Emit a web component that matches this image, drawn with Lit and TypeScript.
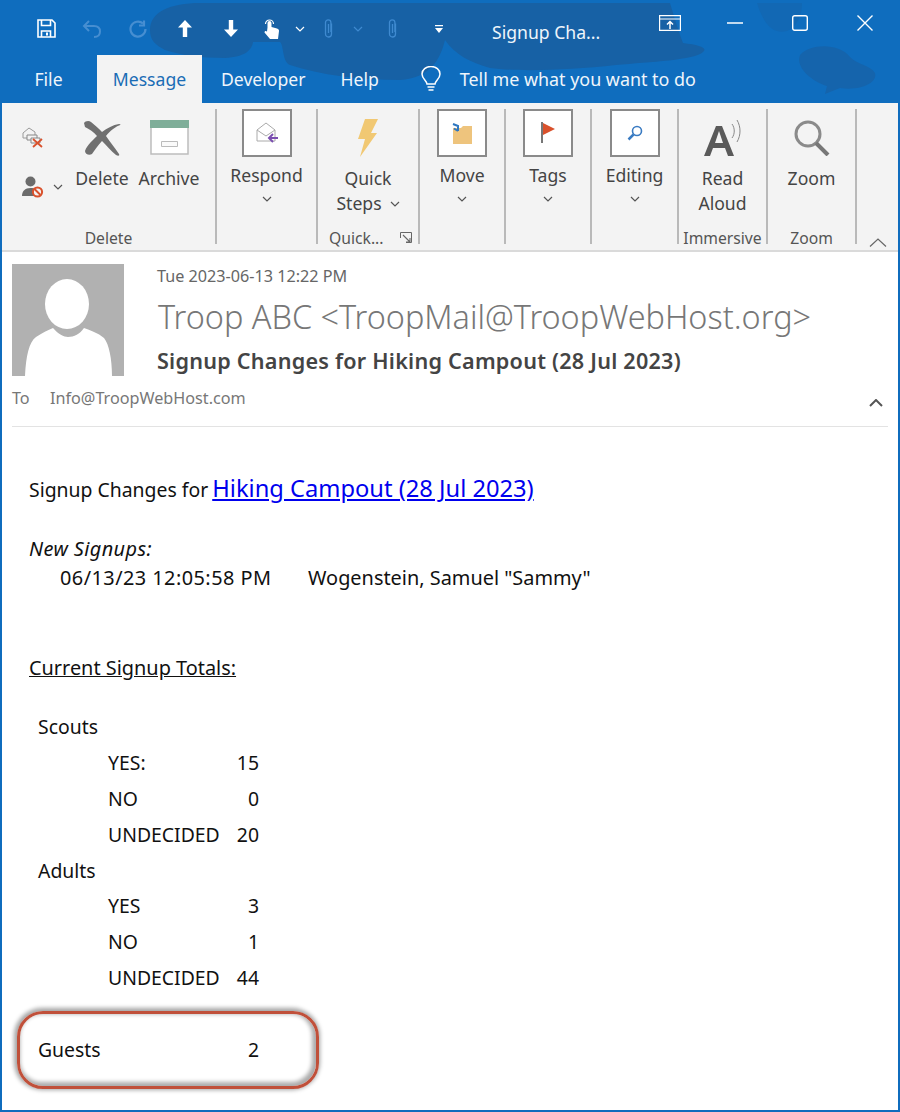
import { LitElement, html, css, svg } from "lit";
import { customElement } from "lit/decorators.js";

const chev = (cls = "chev") => html`<svg class=${cls} viewBox="0 0 10 6"><path d="M1 1l4 4 4-4" fill="none" stroke="currentColor" stroke-width="1.2"/></svg>`;

@customElement("app-root")
export class AppRoot extends LitElement {
  static styles = css`
    :host { display: block; width: 900px; height: 1112px; overflow: hidden; font-family: "Noto Sans", "Open Sans", sans-serif; }
    * { box-sizing: border-box; }
    .win { position: relative; width: 900px; height: 1112px; background: #fff; border: solid #0f6cbd; border-width: 0 2px 2px; display: flex; flex-direction: column; }
    .head { position: relative; margin: 0 -2px; height: 103px; background: #0f6dbe; color: #fff; flex: none; overflow: hidden; }
    .patches { position: absolute; inset: 0; width: 900px; height: 103px; }
    .qat, .tabs { position: relative; display: flex; align-items: center; }
    .qat { height: 55px; padding: 2px 0 0 23px; }
    .slot { display: flex; justify-content: center; align-items: center; height: 32px; flex: none; }
    .w46 { width: 46px; } .w34 { width: 34px; } .w24 { width: 24px; } .w28 { width: 28px; } .w6 { width: 6px; } .w15 { width: 15px; } .w1 { width: 1px; }
    .title { margin-left: 39px; width: 150px; font-size: 17.6px; white-space: nowrap; color: #eef5fb; margin-top: 6px; }
    .ctl { display: flex; position: absolute; right: 3px; top: 0; height: 46px; }
    .ctl div { width: 65px; display: flex; justify-content: center; align-items: center; }
    .tabs { height: 48px; font-size: 17.6px; color: #eef5fb; }
    .tab { height: 48px; display: flex; align-items: center; }
    .tab.file { width: 97px; justify-content: center; }
    .tab.msg { width: 105px; justify-content: center; background: #f3f3f3; color: #1a6cb5; }
    .tab.dev { margin-left: 19px; }
    .tab.help { margin-left: 35px; }
    .tab.bulb { margin-left: 42px; }
    .tab.tell { margin-left: 19px; font-size: 17.9px; }

    .ribbon { height: 149px; flex: none; background: #f3f3f3; border-bottom: 2px solid #dadada; display: flex; padding-top: 6px; color: #444; font-size: 17.6px; position: relative; }
    .grp { height: 135px; border-right: 2px solid #b9b9b9; display: flex; flex-direction: column; flex: none; }
    .g1 { width: 215px; } .g2 { width: 101px; } .g3 { width: 102px; } .g4 { width: 86px; } .g5 { width: 86px; } .g6 { width: 87px; } .g7 { width: 89px; } .g8 { width: 89px; }
    .gbody { height: 118px; flex: none; display: flex; flex-direction: column; align-items: center; line-height: 25px; }
    .glabel { height: 22px; line-height: 22px; font-size: 15.7px; text-align: center; color: #555; display: flex; justify-content: center; white-space: nowrap; }
    .box { width: 50px; height: 48px; border: 2px solid #8a8a8a; background: #fff; display: flex; align-items: center; justify-content: center; margin-bottom: 6px; flex: none; }
    .ico { height: 57px; flex: none; display: flex; align-items: center; justify-content: center; }
    .chev { width: 10px; height: 6px; color: #555; display: block; }
    .chev.wchev { color: #fff; }
    .chev.dchev { color: #3f8ad0; }
    .under { margin-top: 8px; }
    .row { flex-direction: row; align-items: flex-start; }
    .smalls { width: 69px; padding: 0 0 0 17px; flex: none; }
    .smalls .s1 { height: 40px; display: flex; align-items: flex-end; padding: 0 0 1px 3px; }
    .smalls .s2 { height: 36px; display: flex; align-items: center; gap: 9px; margin-top: 20px; padding-left: 3px; }
    .col1 { width: 62px; display: flex; flex-direction: column; align-items: center; flex: none; }
    .col2 { width: 66px; margin-left: 3px; display: flex; flex-direction: column; align-items: center; flex: none; }
    .inl { display: flex; align-items: center; gap: 8px; }
    .launch { margin-left: 16px; margin-top: 5px; }
    .qlab { justify-content: flex-start; padding-left: 11px; }
    .collapse { position: absolute; left: 867px; top: 135px; }

    .hdr { height: 175px; flex: none; position: relative; padding: 0 10px; color: #666; }
    .htop { display: flex; height: 124px; padding-top: 12px; }
    .avatar { width: 112px; height: 112px; flex: none; display: block; }
    .hmeta { margin-left: 34px; }
    .date { font-size: 16.2px; line-height: 22px; color: #666; margin-top: 1px; margin-left: -1px; }
    .sender { font-size: 32.4px; line-height: 42px; font-weight: 300; color: #777; margin-top: 8px; white-space: nowrap; }
    .subj { font-size: 21.6px; line-height: 28px; font-weight: 600; color: #444; margin-top: 10px; white-space: nowrap; letter-spacing: .23px; margin-left: -1px; }
    .to { display: flex; font-size: 16.2px; line-height: 22px; color: #777; height: 51px; padding-top: 11px; border-bottom: 1px solid #e3e3e3; position: relative; }
    .to span:first-child { width: 38px; }
    .upb { position: absolute; right: 5px; top: 23px; }

    .body { padding: 0 0 0 27px; color: #111; font-size: 19.4px; line-height: 26px; }
    .l1 { margin-top: 46px; height: 30px; display: flex; align-items: flex-end; gap: 4px; white-space: nowrap; }
    .l1 a { color: #0000ee; font-size: 23.7px; line-height: 30px; text-decoration: underline; }
    .new { margin-top: 33px; font-style: italic; font-size: 19.9px; letter-spacing: .4px; }
    .sign { display: flex; padding-left: 31px; margin-top: 3px; font-size: 19.9px; }
    .sign span:first-child { width: 248px; letter-spacing: .45px; }
    .cur { margin-top: 64px; text-decoration: underline; font-size: 19.9px; }
    .totals { margin-top: 28px; display: grid; grid-template-columns: 230px; }
    .tr { display: flex; height: 35.9px; align-items: center; }
    .tr.head2 { padding-left: 9px; }
    .tr.sub { padding-left: 79px; }
    .tr .v { margin-left: auto; }
    .guests { width: 302px; height: 78px; margin: 15px 0 0 -12px; border: 3px solid #c0503a; border-radius: 26px; box-shadow: -1px -1px 4px 2px #a5a5a5, inset -2px -2px 4px 2px #ababab; display: flex; align-items: center; padding: 0 0 1px 18px; }
    .guests .g { width: 224px; display: flex; justify-content: space-between; padding-right: 3px; }
  `;

  patches() {
    return svg`<svg class="patches" viewBox="0 0 900 103">
      <path fill="#1761a5" d="M150 30C150 12 170 3 200 3L670 3C675 20 680 35 683 43C700 45 708 48 703 52C695 60 650 62 616 65C570 70 520 72 490 68C470 62 455 55 445 40C440 60 430 78 400 80C360 80 320 75 290 65C282 62 284 45 280 42L253 42C252 50 245 57 225 58C200 58 180 55 165 50C155 45 150 40 150 30Z"/>
      <path fill="#1564ac" d="M800 55c10-12 40-12 50 2 8 8 20 8 25 16 3 10-15 18-35 15l-15 6 2-8c-14-4-32-18-27-31z"/>
      <path fill="#1268b4" d="M757 3h45c0 12-5 24-15 28-14 4-24-8-30-28z"/>
    </svg>`;
  }

  render() {
    const clip = html`<svg width="10" height="20" viewBox="0 0 10 20" fill="none" stroke="#3f8ad0" stroke-width="1.3"><path d="M7.500 4.500v10.500a3 3 0 0 1-6 0V3.500a2.700 2.700 0 0 1 5.400 0V13"/><path d="M4.500 5v9"/></svg>`;
    return html`<div class="win">
      <div class="head">
        ${this.patches()}
        <div class="qat">
          <div class="slot w46"><svg width="19" height="19" viewBox="0 0 19 19" fill="none" stroke="#fff" stroke-width="1.6"><path d="M1 1h14l3 3v14H1z"/><path d="M4.500 1v5.500h9V1M4.500 18v-6h9v6"/><path d="M10 13.500v3" stroke-width="2"/></svg></div>
          <div class="slot w46"><svg width="20" height="18" viewBox="0 0 20 18" fill="none" stroke="#468ed1" stroke-width="2"><path d="M7 1L2 6l5 5M2 6h10c4 0 6 2.500 6 5.500S16 17 12 17"/></svg></div>
          <div class="slot w46"><svg width="18" height="18" viewBox="0 0 18 18" fill="none" stroke="#468ed1" stroke-width="2.200"><path d="M14 3.500A7.500 7.500 0 1 0 16.500 9"/><path d="M10 5.500h5V.5"/></svg></div>
          <div class="slot w1"></div>
          <div class="slot w46"><svg width="14" height="17" viewBox="0 0 14 17" fill="#fff"><path d="M7 0l7 7.500H9.200V17H4.800V7.500H0z"/></svg></div>
          <div class="slot w46"><svg width="14" height="17" viewBox="0 0 14 17" fill="#fff"><path d="M7 17L0 9.500h4.800V0h4.400v9.500H14z"/></svg></div>
          <div class="slot w34"><svg width="15" height="20" viewBox="0 0 15 20" fill="#fff"><path d="M3.500 8.500V4a2 2 0 0 1 4 0v4l5.500 1.500c1.500.5 2 1 2 2.500L14 20H6L.5 13.500c0-1.500 1-2 2.500-1z"/><path d="M1.500 5a4 4 0 0 1 8 0" fill="none" stroke="#fff" stroke-width="1.200"/></svg></div>
          <div class="slot w24">${chev("chev wchev")}</div>
          <div class="slot w34">${clip}</div>
          <div class="slot w24">${chev("chev dchev")}</div>
          <div class="slot w6"></div>
          <div class="slot w34">${clip}</div>
          <div class="slot w15"></div>
          <div class="slot w28"><svg width="8" height="8" viewBox="0 0 8 8" fill="#fff"><path d="M0 0h8v1.200H0zM0 3h8L4 8z"/></svg></div>
          <div class="title">Signup Cha...</div>
          <div class="ctl">
            <div><svg width="22" height="16" viewBox="0 0 22 16" fill="none" stroke="#fff" stroke-width="1.200"><path d="M.6.6h20.800v14.800H.6zM.6 4h20.800"/><path d="M11 14V7M8 9.500l3-3 3 3" stroke-width="1.500"/></svg></div>
            <div><svg width="16" height="2" viewBox="0 0 16 2"><path d="M0 1h16" stroke="#fff" stroke-width="1.500"/></svg></div>
            <div><svg width="16" height="16" viewBox="0 0 16 16" fill="none" stroke="#fff" stroke-width="1.400"><rect x=".7" y=".7" width="14.600" height="14.600" rx="2"/></svg></div>
            <div><svg width="16" height="16" viewBox="0 0 16 16" fill="none" stroke="#fff" stroke-width="1.400"><path d="M.5.5l15 15M15.500.5l-15 15"/></svg></div>
          </div>
        </div>
        <div class="tabs">
          <div class="tab file">File</div>
          <div class="tab msg">Message</div>
          <div class="tab dev">Developer</div>
          <div class="tab help">Help</div>
          <div class="tab bulb"><svg width="20" height="26" viewBox="0 0 20 26" fill="none" stroke="#fff" stroke-width="1.500"><path d="M6 18c0-3-5-5-5-10a9 7.500 0 0 1 18 0c0 5-5 7-5 10z"/><path d="M6.500 21h7M7.500 24h5"/></svg></div>
          <div class="tab tell">Tell me what you want to do</div>
        </div>
      </div>

      <div class="ribbon">
        <div class="grp g1">
          <div class="gbody row">
            <div class="smalls">
              <div class="s1"><svg width="22" height="22" viewBox="0 0 22 22" fill="none"><path d="M1 7l6-5 6 4v6H1z" stroke="#999"/><path d="M5 9h10v5H5z" fill="#f3f3f3" stroke="#888"/><path d="M9 12h9v5H9z" fill="#f3f3f3" stroke="#888"/><path d="M11 13l9 8M20 13l-9 8" stroke="#d9512c" stroke-width="1.800"/></svg></div>
              <div class="s2"><svg width="22" height="22" viewBox="0 0 22 22"><circle cx="8.500" cy="5.500" r="5" fill="#6b6b6b"/><path d="M0 20c0-5 3-8 8.500-8S15 14 15 20z" fill="#6b6b6b"/><circle cx="15.500" cy="16" r="4.600" fill="#f3f3f3" stroke="#d9512c" stroke-width="2"/><path d="M12.500 13l6 6" stroke="#d9512c" stroke-width="2"/></svg>${chev()}</div>
            </div>
            <div class="col1"><div class="ico"><svg width="38" height="36" viewBox="0 0 38 36"><path d="M1 3c1-2 5-3 7-1 4 3 8 7 11 10C24 8 30 5 36 4c2 0 2 1 0 1.500-5 2-10 6.500-13 10.500 4 6 9 12 13 18 1 2-1 2-3 1-5-4-10-10-14-14-4 4-7 9-10 13-3 2-7 0-7-3 2-6 8-11 12-15C11 12 6 9 2 7z" fill="#707070"/></svg></div>Delete</div>
            <div class="col2"><div class="ico"><svg width="39" height="35" viewBox="0 0 39 35"><path d="M1 1h37v33H1z" fill="#fff" stroke="#bdbdbd" stroke-width="1.500"/><path d="M0 0h39v8H0z" fill="#7fae99"/><path d="M11.500 21.500h16v5h-16z" fill="#fafafa" stroke="#bbb"/></svg></div>Archive</div>
          </div>
          <div class="glabel">Delete</div>
        </div>
        <div class="grp g2">
          <div class="gbody"><div class="box"><svg width="22" height="24" viewBox="0 0 22 24" fill="none"><path d="M1 9l9-7 9 7v11H1z" stroke="#aaa"/><path d="M1 9l9 6 9-6" stroke="#aaa"/><path d="M22 17h-9M17 13l-4 4 4 4" stroke="#7b4fb0" stroke-width="2"/></svg></div>Respond${chev("chev under")}</div>
          <div class="glabel"></div>
        </div>
        <div class="grp g3">
          <div class="gbody"><div class="ico"><svg width="20" height="38" viewBox="0 0 20 38"><path d="M7 0h13l-7 14h6L2 38l5-18H0z" fill="#f1c873"/></svg></div>Quick<div class="inl">Steps ${chev()}</div></div>
          <div class="glabel qlab">Quick...<svg class="launch" width="12" height="11" viewBox="0 0 12 11" fill="none" stroke="#666"><path d="M.5 6V.5H11.500V10.500H6"/><path d="M3 3l7 7M10 6v4H6" stroke-width="1.100"/></svg></div>
        </div>
        <div class="grp g4">
          <div class="gbody"><div class="box"><svg width="22" height="22" viewBox="0 0 22 22"><path d="M2 6h8l2-2h9v18H2z" fill="#eec47d"/><path d="M2 2l5 2v5M7 9L3 6.500" stroke="#2f77c0" stroke-width="2" fill="none"/></svg></div>Move${chev("chev under")}</div>
          <div class="glabel"></div>
        </div>
        <div class="grp g5">
          <div class="gbody"><div class="box"><svg width="16" height="22" viewBox="0 0 16 22"><path d="M2 0v21" stroke="#777" stroke-width="2"/><path d="M3 1l12 6-12 6z" fill="#d9512c"/></svg></div>Tags${chev("chev under")}</div>
          <div class="glabel"></div>
        </div>
        <div class="grp g6">
          <div class="gbody"><div class="box"><svg width="16" height="16" viewBox="0 0 16 16" fill="none" stroke="#3a7bc2"><circle cx="10" cy="6" r="4.500" stroke-width="1.600"/><path d="M6.500 9.500L1.500 14.500" stroke-width="2.500"/></svg></div>Editing${chev("chev under")}</div>
          <div class="glabel"></div>
        </div>
        <div class="grp g7">
          <div class="gbody"><div class="ico"><svg width="38" height="40" viewBox="0 0 38 40"><path d="M0 38L12 8h6l12 30h-6l-3-8H9l-3 8zM11 25h8l-4-12z" fill="#5a5a5a" fill-rule="evenodd"/><path d="M28 6c3 4 3 10 0 14M33 2c4 7 4 15 0 22" fill="none" stroke="#888"/></svg></div>Read<div>Aloud</div></div>
          <div class="glabel">Immersive</div>
        </div>
        <div class="grp g8">
          <div class="gbody"><div class="ico"><svg width="36" height="36" viewBox="0 0 36 36" fill="none" stroke="#8a8a8a"><circle cx="14" cy="14" r="12" stroke-width="3"/><path d="M22 23l12 12" stroke="#777" stroke-width="4"/></svg></div>Zoom</div>
          <div class="glabel">Zoom</div>
        </div>
        <svg class="collapse" width="18" height="9" viewBox="0 0 18 9" fill="none" stroke="#666" stroke-width="1.200"><path d="M1 8.500L9 1l8 7.500"/></svg>
      </div>

      <div class="hdr">
        <div class="htop">
          <svg class="avatar" viewBox="0 0 112 112"><rect width="112" height="112" fill="#b1b1b1"/><ellipse cx="55" cy="40" rx="22" ry="25" fill="#fff"/><path d="M13 112C14 92 17 78 24 73C30 69 36 66 41 64C46 70 52 73 56 73C62 73 68 70 72 64C78 66 86 69 92 74C97 80 100 95 100 112Z" fill="#fff"/></svg>
          <div class="hmeta">
            <div class="date">Tue 2023-06-13 12:22 PM</div>
            <div class="sender">Troop ABC &lt;TroopMail@TroopWebHost.org&gt;</div>
            <div class="subj">Signup Changes for Hiking Campout (28 Jul 2023)</div>
          </div>
        </div>
        <div class="to"><span>To</span><span>Info@TroopWebHost.com</span>
          <svg class="upb" width="14" height="8" viewBox="0 0 14 8" fill="none" stroke="#555" stroke-width="2"><path d="M1 7l6-6 6 6"/></svg></div>
      </div>

      <div class="body">
        <div class="l1"><span>Signup Changes for</span><a>Hiking Campout (28 Jul 2023)</a></div>
        <div class="new">New Signups:</div>
        <div class="sign"><span>06/13/23 12:05:58 PM</span><span>Wogenstein, Samuel "Sammy"</span></div>
        <div class="cur">Current Signup Totals:</div>
        <div class="totals">
          <div class="tr head2">Scouts</div>
          <div class="tr sub">YES:<span class="v">15</span></div>
          <div class="tr sub">NO<span class="v">0</span></div>
          <div class="tr sub">UNDECIDED<span class="v">20</span></div>
          <div class="tr head2">Adults</div>
          <div class="tr sub">YES<span class="v">3</span></div>
          <div class="tr sub">NO<span class="v">1</span></div>
          <div class="tr sub">UNDECIDED<span class="v">44</span></div>
        </div>
        <div class="guests"><div class="g"><span>Guests</span><span>2</span></div></div>
      </div>
    </div>`;
  }
}
